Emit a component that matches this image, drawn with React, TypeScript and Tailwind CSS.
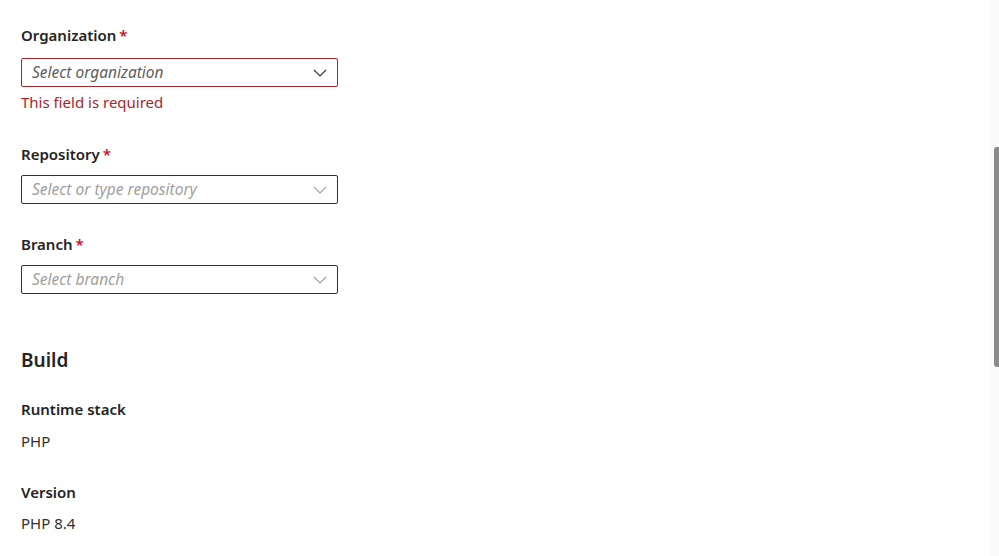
const font = { fontFamily: '"Segoe UI", "Noto Sans", "Open Sans", sans-serif' };

function Chevron({ color }: { color: string }) {
  return (
    <svg width="14" height="8" viewBox="0 0 14 8" fill="none">
      <path d="M1 1l6 6 6-6" stroke={color} strokeWidth="1.1" />
    </svg>
  );
}

interface FieldProps {
  label: string;
  placeholder: string;
  error?: string;
  muted?: boolean;
  gap: string;
}

function SelectField({ label, placeholder, error, muted, gap }: FieldProps) {
  return (
    <div>
      <div className="flex h-[20px] items-center text-[15px] leading-[20px] font-semibold text-[#242424]">
        {label}
        <span className="ml-[3px] text-[#c50f1f]">*</span>
      </div>
      <div
        className={
          gap +
          ' flex h-[29px] w-[317px] items-center justify-between rounded-[2px] border pl-[10px] pr-[10px] ' +
          (error ? 'border-[#a4262c]' : 'border-[#323130]')
        }
      >
        <span className={'text-[15.5px] italic ' + (muted ? 'text-[#a19f9d]' : 'text-[#605e5c]')}>
          {placeholder}
        </span>
        <Chevron color={muted ? '#a19f9d' : '#323130'} />
      </div>
      {error && <div className="mt-[5px] text-[15px] leading-[20px] text-[#a4262c]">{error}</div>}
    </div>
  );
}

export default function App() {
  return (
    <div className="relative h-[556px] w-[999px] overflow-hidden bg-white" style={font}>
      <div className="pl-[21px] pt-[25px]">
        <SelectField
          label="Organization"
          placeholder="Select organization"
          error="This field is required"
          gap="mt-[13px]"
        />
        <div className="mt-[32px]">
          <SelectField label="Repository" placeholder="Select or type repository" muted gap="mt-[11px]" />
        </div>
        <div className="mt-[30px]">
          <SelectField label="Branch" placeholder="Select branch" muted gap="mt-[11px]" />
        </div>
        <div className="mt-[54px] text-[19px] leading-[24px] font-semibold text-[#242424]">Build</div>
        <div className="mt-[27px] text-[15px] leading-[20px] font-semibold text-[#242424]">Runtime stack</div>
        <div className="mt-[12px] text-[15px] leading-[20px] text-[#323130]">PHP</div>
        <div className="mt-[31px] text-[15px] leading-[20px] font-semibold text-[#242424]">Version</div>
        <div className="mt-[11px] text-[15px] leading-[20px] text-[#323130]">PHP 8.4</div>
      </div>
      <div className="absolute right-0 top-0 h-full w-[9px] bg-[#fafafa]">
        <div className="absolute right-0 top-[147px] h-[220px] w-[5px] rounded-l-[3px] bg-[#8a8a8a]" />
      </div>
    </div>
  );
}
